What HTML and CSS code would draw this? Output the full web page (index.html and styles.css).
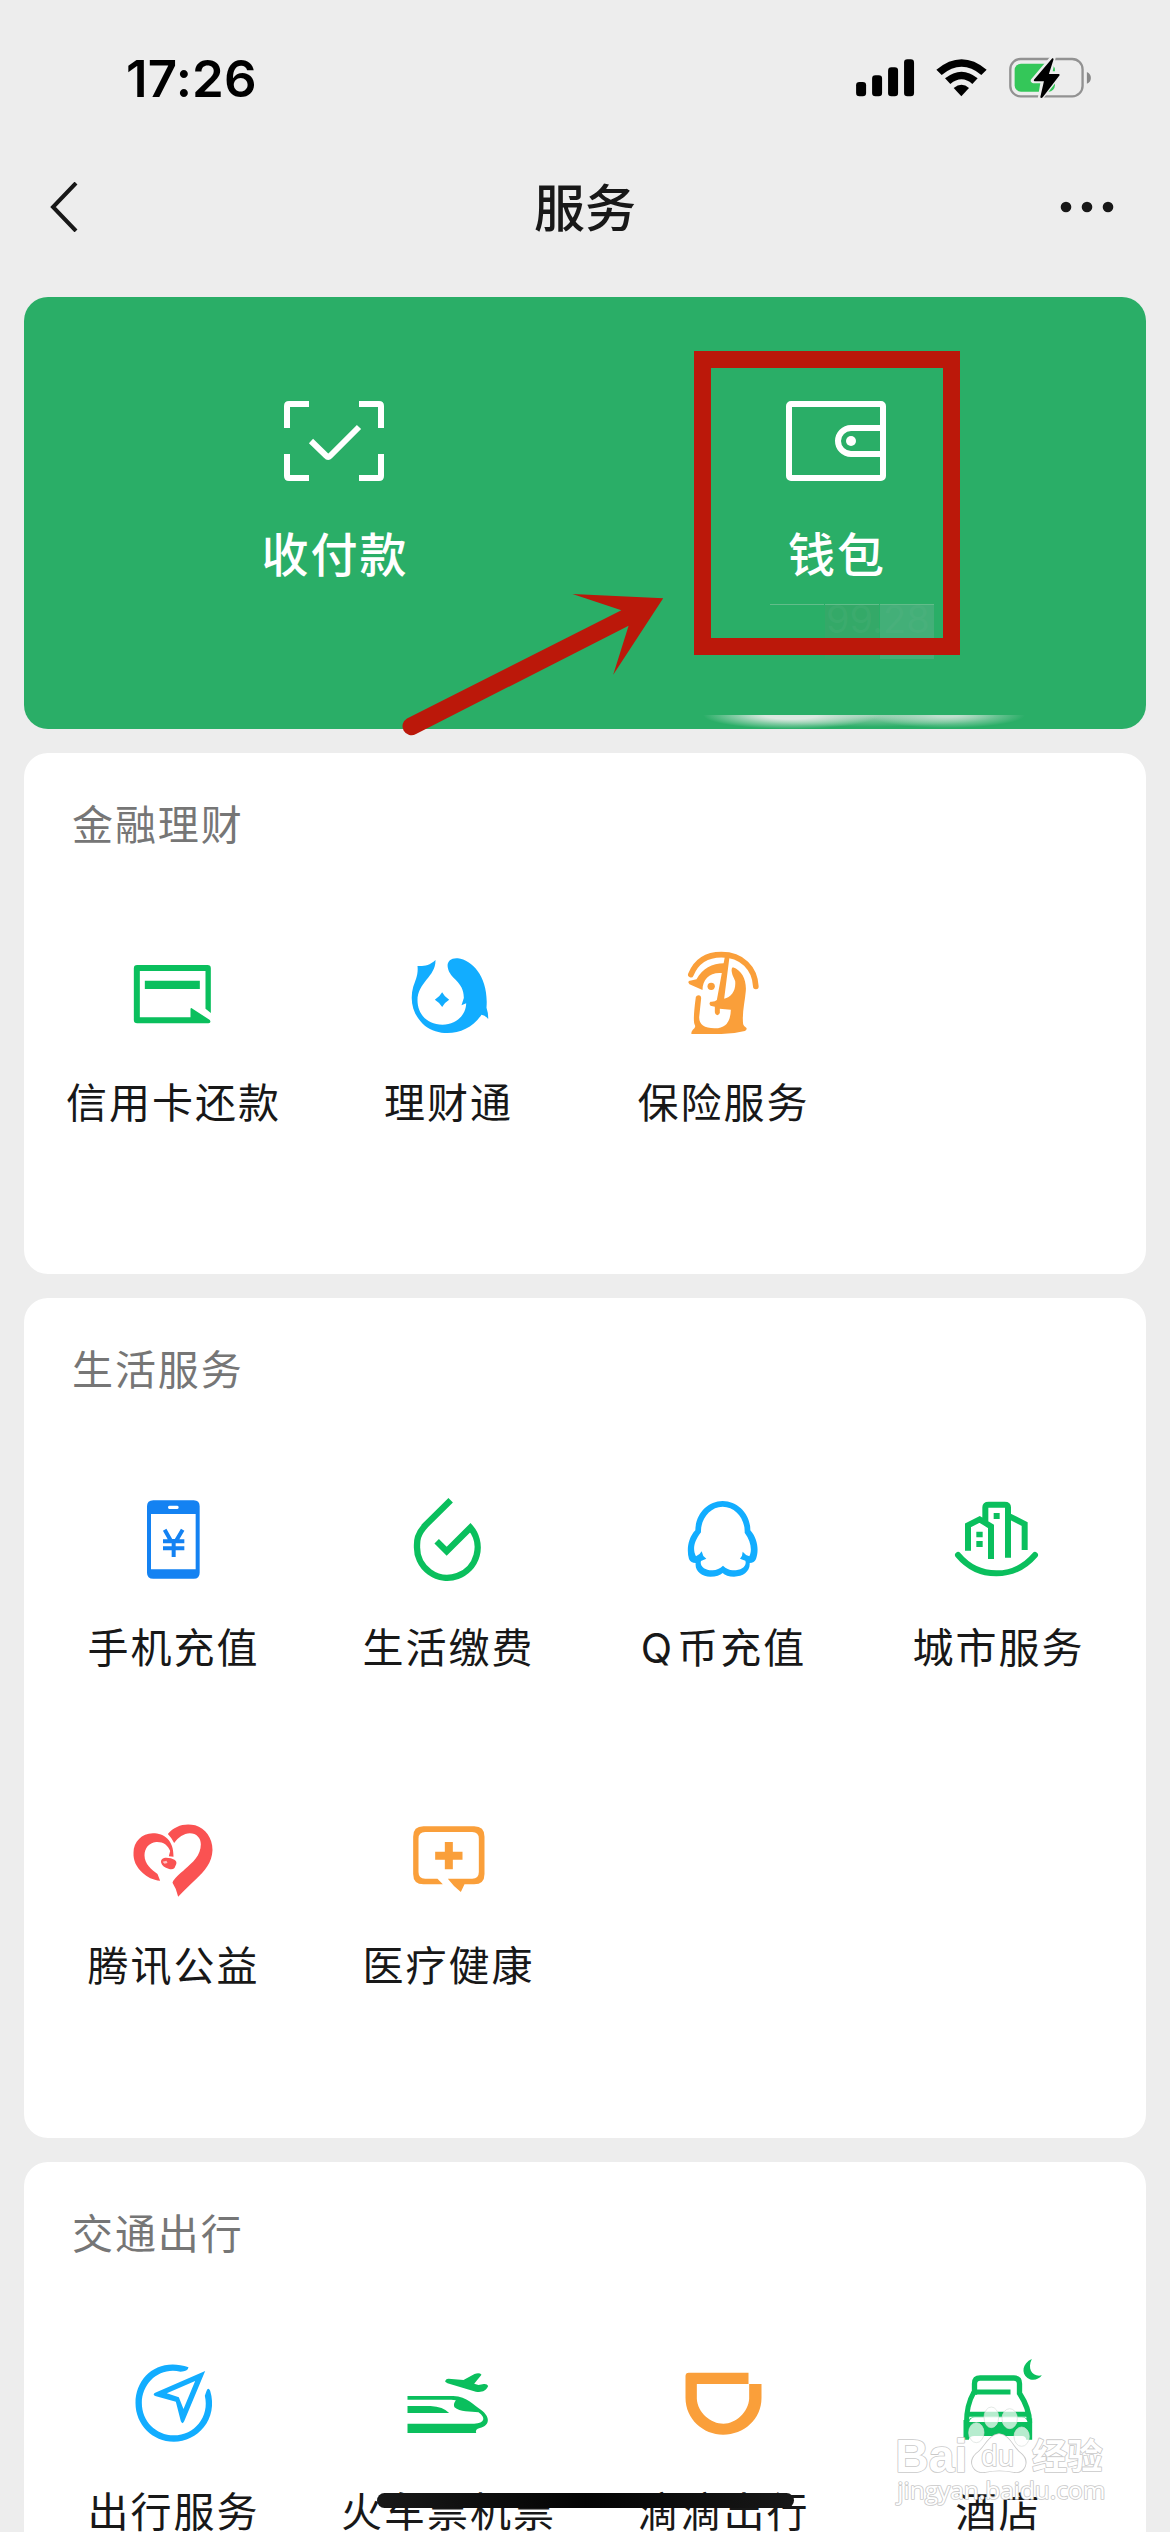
FILE: index.html
```html
<!DOCTYPE html>
<html lang="zh-CN">
<head>
<meta charset="utf-8">
<title>服务</title>
<link rel="stylesheet" href="styles.css">
</head>
<body>
<div class="screen">
  <header class="status">
    <span class="time">17:26</span>
    <svg class="status-icons" viewBox="48 50 708 124">
      <rect x="48" y="125" width="30" height="43" rx="10"/>
      <rect x="96" y="105" width="30" height="63" rx="10"/>
      <rect x="144" y="81" width="30" height="87" rx="10"/>
      <rect x="192" y="57" width="30" height="111" rx="10"/>
      <path d="M289 88Q365 25 440 88L424 104Q365 55 305 104Z"/>
      <path d="M315 114Q365 74 413 114L397 131Q365 103 331 131Z"/>
      <path d="M341 143Q365 124 387 143L364 168Z"/>
      <rect x="511" y="56" width="217" height="112" rx="31" fill="none" stroke="#929292" stroke-width="7"/>
      <path d="M741 95Q753 101 753 113Q753 125 741 130Z" fill="#888"/>
      <rect x="524" y="70" width="121" height="84" rx="19" fill="#34c759"/>
      <path d="M640 50L580 121H610L601 174L659 100H629Z" stroke="#ededed" stroke-width="15" stroke-linejoin="round"/>
      <path d="M637 54L582 118Q580 123 585 123H612L601 171Q604 176 609 170L659 105Q660 101 656 101H627L641 57Q640 52 637 54Z"/>
    </svg>
  </header>
  <nav class="nav">
    <svg class="back" viewBox="0 0 28 50"><path d="M26 1L3 25L26 49"/></svg>
    <h1>服务</h1>
    <svg class="more" viewBox="0 0 54 12"><circle cx="6" cy="6" r="5.3"/><circle cx="27" cy="6" r="5.3"/><circle cx="48" cy="6" r="5.3"/></svg>
  </nav>

  <main>
    <section class="pay">
      <div class="pay-item">
        <svg viewBox="0 0 100 80">
          <path d="M3 27V5Q3 3 5 3H25M75 3H95Q97 3 97 5V27M97 53V75Q97 77 95 77H75M25 77H5Q3 77 3 75V53"/>
          <path d="M27 40L42.5 55Q44 57 46 55L75 26" />
        </svg>
        <span>收付款</span>
      </div>
      <div class="pay-item">
        <svg viewBox="0 0 100 80">
          <rect x="3" y="3" width="94" height="74" rx="2"/>
          <path d="M97 27H65A13 13 0 0 0 65 53H97"/>
          <circle class="dot" cx="65" cy="40" r="5"/>
        </svg>
        <span>钱包</span>
      </div>
      <div class="balance"><i></i><i></i><i></i><b>99.28</b></div>
      <div class="glare"></div>
    </section>

    <section class="card">
      <h2>金融理财</h2>
      <div class="grid">
        <div class="item">
          <svg class="green" viewBox="262.5 507 270 270">
            <path d="M290 555H501Q511 555 511 565V699L495 686V573H298V712H450V687Q451 682 456 686L508 720Q513 728 504 730H290Q280 730 280 720V565Q280 555 290 555Z"/>
            <path d="M313 602H478V627H313Z"/>
          </svg>
          <span>信用卡还款</span>
        </div>
        <div class="item">
          <svg class="blue" viewBox="1087.5 507 270 270">
            <path d="M1185 540C1166 558 1148 559 1131 558C1134 585 1124 602 1118 621C1106 665 1119 708 1153 737C1203 775 1284 764 1323 704Q1334 706 1343 717Q1344 701 1338 683C1345 594 1298 541 1252 535C1230 533 1218 546 1222 563C1228 598 1271 603 1270 654L1263 676L1277 670C1277 704 1248 734 1206 734C1158 734 1131 700 1131 661C1131 607 1186 590 1185 540Z"/>
            <path d="M1205 637Q1211 650 1226 659Q1211 668 1205 681Q1198 668 1183 659Q1198 650 1205 637Z"/>
          </svg>
          <span>理财通</span>
        </div>
        <div class="item">
          <svg class="orange" viewBox="232.5 87 270 270">
            <path class="line" stroke-width="17" stroke-linecap="round" d="M271 164C290 117 326 104 363 104C425 104 463 145 466 199"/>
            <path d="M265 183L288 178C306 145 334 131 371 130L369 160C330 154 306 177 306 210L267 193Q261 187 265 183Z"/>
            <circle cx="332" cy="199" r="11"/>
            <path d="M373 110H387L371 236C392 231 407 212 404 183L396 165Q390 146 397 142C425 151 438 181 436 212C433 246 424 280 428 313Q430 320 438 324Q440 330 433 333Q390 344 350 342H273Q271 336 277 329Q287 322 283 315Q276 304 286 231Q288 226 294 226Q302 226 302 235L296 292Q296 325 342 325Q390 326 391 269Q373 268 358 266V279Q355 285 350 286Q344 285 343 277V260L330 257Q324 250 330 245Q344 246 349 240Z"/>
          </svg>
          <span>保险服务</span>
        </div>
      </div>
    </section>

    <section class="card">
      <h2>生活服务</h2>
      <div class="grid">
        <div class="item">
          <svg class="royal" viewBox="264 522 270 270">
            <path fill-rule="evenodd" d="M340 541H461Q479 541 479 559V758Q479 776 461 776H340Q321 776 321 758V559Q321 541 340 541ZM333 582V748H467V582ZM388 557Q384 557 384 562Q384 567 388 567H412Q416 567 416 562Q416 557 412 557Z"/>
            <path class="line" stroke-width="12" d="M374 629L393 663H408L428 629M369 664H433M369 685H433M401 663V711"/>
          </svg>
          <span>手机充值</span>
        </div>
        <div class="item">
          <svg class="green" viewBox="1092 522 270 270">
            <path class="line" stroke-width="19" d="M1235 541L1160 615C1132 645 1134 665 1134 680A91 91 0 1 0 1294 623L1223 694L1193 664"/>
          </svg>
          <span>生活缴费</span>
        </div>
        <div class="item">
          <svg class="blue" viewBox="233 102 270 270">
            <path fill-rule="evenodd" d="M367 123C413 123 451 164 450 211C473 237 476 273 467 297Q462 309 448 309C450 334 429 350 401 350Q377 350 367 339Q356 350 330 350C304 350 283 334 286 309Q271 309 266 297C258 270 263 234 285 211C285 164 321 123 367 123ZM367 140C328 140 300 179 302 217C279 246 277 271 287 289Q299 284 304 274L309 288L318 296L302 303C297 319 315 332 337 331Q354 330 368 317Q382 330 397 331C421 332 441 319 435 302L419 296L425 287L427 275Q435 285 447 289C456 271 452 243 433 218C435 178 406 140 367 140Z"/>
          </svg>
          <span><span class="latin">Q</span>币充值</span>
        </div>
        <div class="item">
          <svg class="green" viewBox="1061 102 270 270">
            <path class="line" stroke-width="18" d="M1106 272V196L1141 178L1175 199V297M1158 187V142Q1158 134 1168 134H1216Q1226 134 1226 142V293M1226 167L1276 192V270"/>
            <path class="line" stroke-width="18" stroke-linecap="round" d="M1076 285Q1122 340 1191 340T1307 285"/>
            <path d="M1183 159h18v18h-18zM1131 215h19v17h-19zM1131 243h19v18h-19z"/>
          </svg>
          <span>城市服务</span>
        </div>
        <div class="item">
          <svg class="red" viewBox="202.5 66 270 270">
            <path d="M322 132C343 108 371 99 404 106C435 115 456 144 456 180C455 218 432 244 407 267C386 287 369 304 353 320Q348 296 336 278C340 266 359 251 373 238C396 218 421 197 421 163C421 144 408 130 388 130C370 131 353 142 341 159Q334 144 322 132Z"/>
            <path d="M325 199L329 183C322 165 308 155 287 156C265 158 252 175 252 196C252 222 273 240 291 252L299 272C277 270 260 261 246 248C227 231 218 210 219 188C219 156 244 130 277 130C311 130 340 151 339 200Z"/>
            <path d="M302 218C299 204 314 200 331 205L342 209Q350 214 347 223L342 234Q335 241 324 236C313 233 304 227 302 218Z"/>
            <path d="M306 215l12 -3l3 7l-9 2z" fill="#ffc0c0"/>
          </svg>
          <span>腾讯公益</span>
        </div>
        <div class="item">
          <svg class="orange" viewBox="1027.5 66 270 270">
            <path d="M1089 109H1241Q1272 109 1272 140V252Q1272 283 1241 283H1212L1201 306Q1179 289 1162 266H1235Q1255 266 1255 246V146Q1255 126 1235 126H1094Q1074 126 1074 146V246Q1074 266 1094 266H1131L1147 283H1089Q1058 283 1058 252V140Q1058 109 1089 109Z"/>
            <path d="M1153 156H1177V185H1206V209H1177V238H1153V209H1124V185H1153Z"/>
          </svg>
          <span>医疗健康</span>
        </div>
      </div>
    </section>

    <section class="card">
      <h2>交通出行</h2>
      <div class="grid">
        <div class="item">
          <svg class="blue" viewBox="202.5 504 270 270">
            <path d="M384 532C293 501 225 562 225 639C225 704 276 755 340 755C410 755 475 688 449 602Q443 590 438 603L433 617C448 680 402 736 340 736C286 736 244 693 244 639C244 578 298 530 360 545Q382 545 384 532Z"/>
            <path fill-rule="evenodd" d="M434 543L371 694Q366 705 361 694L346 635L284 618Q275 613 284 608ZM404 573L319 610L355 622L369 657Z"/>
          </svg>
          <span>出行服务</span>
        </div>
        <div class="item">
          <svg class="green" viewBox="1027.5 504 270 270">
            <path d="M1154 575Q1155 566 1164 566L1209 570L1242 552Q1257 547 1263 554L1241 581L1254 585L1270 582Q1280 581 1283 588C1276 603 1264 608 1246 605L1161 580Z"/>
            <path fill-rule="evenodd" d="M1041 618H1178C1221 620 1240 646 1262 660C1289 680 1290 706 1258 714Q1243 717 1247 729H1041V701H1241C1273 700 1277 683 1254 667C1230 665 1198 666 1182 652Q1177 643 1186 631L1172 629H1041Z"/>
            <path d="M1041 648H1110Q1148 650 1166 669H1041Z"/>
          </svg>
          <span>火车票机票</span>
        </div>
        <div class="item">
          <svg class="orange" viewBox="172.5 84 270 270">
            <path fill-rule="evenodd" d="M205 128H384V162H423V204C423 268 370 314 308 314C248 314 195 267 195 204V138Q195 128 205 128ZM229 162V206C231 248 271 281 309 281C347 281 384 244 386 206V162Z"/>
          </svg>
          <span>滴滴出行</span>
        </div>
        <div class="item">
          <svg class="green" viewBox="217.5 24 270 270">
            <path class="line" stroke-width="16" d="M282 134V101Q282 84 299 84H400Q417 84 417 101V130C434 156 447 182 447 218"/>
            <path class="line" stroke-width="15" d="M286 126H390M280 127Q258 165 258 218M263 193H445"/>
            <path d="M249 210H265Q271 200 280 202H425Q438 201 441 210L455 205V269H437Q436 258 425 258H281Q267 258 265 269H249Z"/>
            <path d="M266 216Q270 202 283 202H424Q438 202 441 216Z" fill="#fff"/>
            <path d="M454 27C425 40 422 70 441 84C455 94 474 90 484 76C456 82 439 57 454 27Z"/>
          </svg>
          <span>酒店</span>
        </div>
      </div>
    </section>
  </main>

  <div class="highlight"></div>
  <svg class="arrow" viewBox="400 590 268 150">
    <path d="M663.2 598.3L572.5 594L621.4 610.3L407 718.4A9 9 0 0 0 416 734L628.6 625.7L613.2 674.7Z"/>
  </svg>
  <div class="home-bar"></div>
  <svg class="watermark" viewBox="0 0 780 546">
    <g class="paw">
      <ellipse cx="289" cy="248" rx="23" ry="30"/><ellipse cx="334" cy="202" rx="22" ry="31"/><ellipse cx="389" cy="206" rx="23" ry="30"/><ellipse cx="425" cy="260" rx="23" ry="29"/>
    </g>
    <g class="mark">
      <path d="M357 252C392 256 397 293 424 312C449 334 435 371 401 366Q357 357 316 366C280 371 263 336 288 312C317 291 324 257 357 252Z"/>
      <text class="brand" x="46" y="365" textLength="216" lengthAdjust="spacingAndGlyphs">Bai</text>
      <text class="du" x="304" y="348" textLength="98" lengthAdjust="spacingAndGlyphs">du</text>
      <text class="brand-cn" x="456" y="356" textLength="212" lengthAdjust="spacingAndGlyphs">经验</text>
      <text class="site" x="52" y="447" textLength="624" lengthAdjust="spacingAndGlyphs">jingyan.baidu.com</text>
    </g>
  </svg>
</div>
</body>
</html>
```
FILE: styles.css
```css
* { box-sizing: border-box; margin: 0; padding: 0; }

body {
  background: #ededed;
  color: #181818;
  font-family: "Noto Sans CJK SC", sans-serif;
}

.screen {
  position: relative;
  width: 1170px;
  height: 2532px;
  overflow: hidden;
}

.status {
  display: flex;
  align-items: center;
  justify-content: space-between;
  height: 156px;
  padding: 0 78px 0 126px;
}
.time {
  font: 600 51px/1 Inter, sans-serif;
  letter-spacing: 0.2px;
  color: #000;
}
.status-icons { width: 236px; height: 41.3px; }

.nav {
  display: grid;
  grid-template-columns: 1fr auto 1fr;
  align-items: center;
  height: 102px;
  padding: 0 56px 0 50px;
}
.nav h1 {
  padding-bottom: 4px;
  font-size: 51px;
  line-height: 72px;
  font-weight: 500;
  margin: 0 -3px 0 3px;
}
.back {
  width: 28px;
  height: 50px;
  fill: none;
  stroke: #181818;
  stroke-width: 4;
}
.more { width: 54px; height: 12px; justify-self: end; fill: #181818; }

main {
  display: flex;
  flex-direction: column;
  gap: 24px;
  padding: 39px 24px 0;
}

.pay {
  position: relative;
  display: grid;
  grid-template-columns: 502px 502px;
  justify-content: center;
  height: 432px;
  padding-top: 104px;
  border-radius: 24px;
  background: #2aae67;
  color: #fff;
  overflow: hidden;
}
.pay-item {
  display: flex;
  flex-direction: column;
  align-items: center;
  gap: 36px;
}
.pay-item svg {
  width: 100px;
  height: 80px;
  fill: none;
  stroke: #fff;
  stroke-width: 6;
}
.pay-item .dot { fill: #fff; stroke: none; }
.pay-item span {
  font-size: 47px;
  line-height: 70px;
  font-weight: 500;
  letter-spacing: 2px;
  margin-right: -2px;
}
.balance {
  position: absolute;
  left: 746px;
  top: 307px;
  display: flex;
  gap: 1px;
}
.balance i {
  width: 54px;
  height: 55px;
  border-top: 1px solid #62bd8a;
}
.balance i:nth-child(2) { background: #34a968; }
.balance i:nth-child(3) { background: #43af78; }
.balance b {
  position: absolute;
  left: 56px;
  top: -8px;
  font: 400 38px/46px Inter, sans-serif;
  color: rgba(110, 185, 145, 0.14);
}
.glare {
  position: absolute;
  left: 671px;
  bottom: 0;
  width: 330px;
  height: 14px;
  background:
    radial-gradient(ellipse 88px 14px at 96px 0, #dbe8e0 30%, transparent),
    radial-gradient(ellipse 78px 13px at 252px 0, #c0dfce 15%, transparent),
    radial-gradient(ellipse 130px 12px at 172px 0, #a5d3b9, transparent);
}

.card {
  height: 521px;
  border-radius: 24px;
  background: #fff;
}
.card:nth-child(3) { height: 840px; }
.card h2 {
  height: 196px;
  padding: 38px 0 0 48px;
  font-size: 41px;
  line-height: 62px;
  font-weight: 400;
  letter-spacing: 1.9px;
  color: #767676;
}
.grid {
  display: grid;
  grid-template-columns: repeat(4, 275px);
  grid-auto-rows: 318px;
  justify-content: center;
}
.item {
  display: flex;
  flex-direction: column;
  align-items: center;
  gap: 30px;
  font-size: 41px;
  line-height: 62px;
  letter-spacing: 2px;
  white-space: nowrap;
}
.item > span { margin-right: -2px; }
.item svg { width: 90px; height: 90px; overflow: visible; fill: currentColor; }
.item .line { fill: none; stroke: currentColor; }
.latin { font-family: Inter, sans-serif; line-height: 1; padding-right: 3px; }

.green { color: #0abf5d; }
.blue { color: #12adff; }
.royal { color: #1482f2; }
.orange { color: #fa9f3a; }
.red { color: #fa5252; }

.highlight {
  position: absolute;
  left: 694px;
  top: 351px;
  width: 266px;
  height: 304px;
  border: 17px solid #bb180a;
}
.arrow {
  position: absolute;
  left: 400px;
  top: 590px;
  width: 268px;
  height: 150px;
  fill: #bb180a;
}
.home-bar {
  position: absolute;
  left: 377px;
  top: 2493px;
  width: 417px;
  height: 15px;
  border-radius: 8px;
  background: linear-gradient(90deg, #181818, #040404 50%, #181818);
}
.watermark {
  position: absolute;
  left: 880px;
  top: 2350px;
  width: 260px;
  height: 182px;
}
.paw { fill: rgba(255, 255, 255, 0.7); stroke: #d5ddd8; stroke-width: 2; }
.mark {
  fill: #fff;
  stroke: #c9c9c9;
  stroke-width: 5;
  stroke-linejoin: round;
  paint-order: stroke;
}
.brand { font: 700 140px "Liberation Sans", sans-serif; }
.du { font: 400 88px "Liberation Sans", sans-serif; }
.brand-cn { font: 700 106px "Noto Sans CJK SC", sans-serif; }
.site { font: 400 70px "Open Sans", sans-serif; }
```
